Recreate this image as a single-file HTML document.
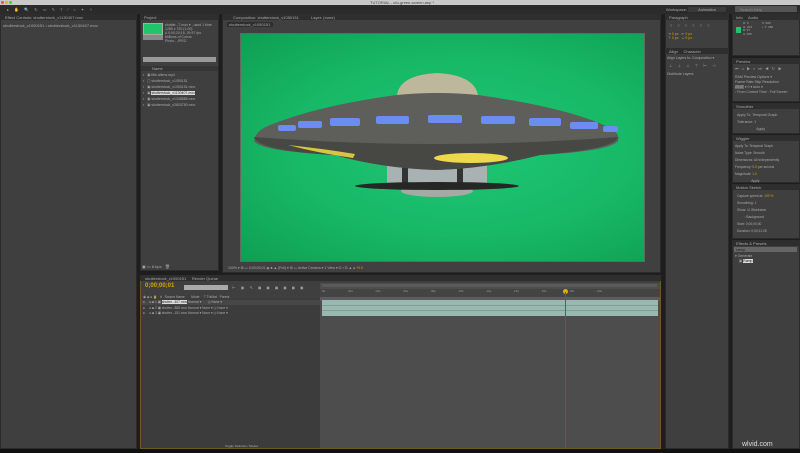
<!DOCTYPE html>
<html><head><style>
*{margin:0;padding:0;box-sizing:border-box}
body{width:800px;height:453px;background:#1e1e1e;position:relative;overflow:hidden;font-family:"Liberation Sans",sans-serif;font-size:4px;color:#bbb}
.a{position:absolute}
.p{position:absolute;background:#3f3f3f;border:1px solid #2a2a2a}
.tab{position:absolute;height:6px;background:#2e2e2e}
.t{position:absolute;white-space:nowrap;font-size:4px;color:#aaa}
.y{color:#d9a400}
</style></head><body>
<div class="a" style="left:0;top:0;width:800px;height:5px;background:#c9c9c9"></div>
<div class="t" style="left:370px;top:0;color:#444">TUTORIAL - ufo-green-screen.aep *</div>
<div class="a" style="left:1px;top:1px;width:3px;height:3px;border-radius:2px;background:#e0554d"></div>
<div class="a" style="left:5px;top:1px;width:3px;height:3px;border-radius:2px;background:#e0b040"></div>
<div class="a" style="left:9px;top:1px;width:3px;height:3px;border-radius:2px;background:#5fbf4c"></div>
<div class="a" style="left:0;top:5px;width:800px;height:9px;background:#2b2b2b"></div>
<div class="t" style="left:7px;top:7px;color:#999;letter-spacing:2px">▸ ✋ 🔍 ↻ ▭ ✎ T ∕ ⌂ ✦ ✧</div>
<div class="t" style="left:666px;top:7px">Workspace: <span style="background:#3a3a3a;padding:0 10px">Animation</span></div>
<div class="a" style="left:735px;top:6px;width:62px;height:6px;background:#555;border-radius:1px"></div>
<div class="t" style="left:740px;top:7px;color:#888">Search Help</div>

<div class="p" style="left:0;top:14px;width:137px;height:435px"></div>
<div class="tab" style="left:0;top:14px;width:137px;background:#2d2d2d"></div>
<div class="t" style="left:5px;top:15px">Effect Controls: shutterstock_v1130407.mov</div>
<div class="t" style="left:3px;top:23px">shutterstock_v1050151 • shutterstock_v1130407.mov</div>

<div class="p" style="left:140px;top:14px;width:79px;height:257px"></div>
<div class="tab" style="left:140px;top:14px;width:79px"></div>
<div class="t" style="left:144px;top:15px">Project</div>
<div class="a" style="left:143px;top:23px;width:20px;height:12px;background:#1fc46b;border:1px solid #aaa"></div>
<div class="a" style="left:143px;top:35px;width:20px;height:5px;background:#888"></div>
<div class="t" style="left:165px;top:23px;line-height:4px;font-size:3.5px">shutter...7.mov ▾ , used 1 time<br>1280 x 720 (1.00)<br>Δ 0;00;20;16, 29.97 fps<br>Millions of Colors<br>Photo - JPEG</div>
<div class="a" style="left:143px;top:57px;width:73px;height:5px;background:#9a9a9a"></div>
<div class="a" style="left:141px;top:66px;width:77px;height:5px;background:#353535"></div>
<div class="t" style="left:152px;top:66px">Name</div>
<div class="t" style="left:143px;top:72px;line-height:6px;font-size:3.5px">▪ &nbsp; ▣ title-aliens.mp4<br>▪ &nbsp; ▢ shutterstock_v1050151<br>▪ &nbsp; ▣ shutterstock_v1050151.mov<br>▪ &nbsp; ▣ <span style="background:#ddd;color:#222">shutterstock_v1130407.mov</span><br>▪ &nbsp; ▣ shutterstock_v1348888.mov<br>▪ &nbsp; ▣ shutterstock_v2803750.mov</div>
<div class="t" style="left:142px;top:264px">▣ ▭ 8 bpc &nbsp; 🗑</div>

<div class="p" style="left:222px;top:14px;width:439px;height:259px;background:#404040"></div>
<div class="tab" style="left:222px;top:14px;width:439px"></div>
<div class="t" style="left:233px;top:15px">Composition: shutterstock_v1050151 &nbsp; &nbsp; &nbsp; &nbsp; &nbsp; Layer: (none)</div>
<div class="a" style="left:227px;top:22px;width:46px;height:5px;background:#2e2e2e"></div>
<div class="t" style="left:229px;top:22px">shutterstock_v1050151</div>
<div class="a" style="left:240px;top:33px;width:405px;height:229px;background:radial-gradient(ellipse at 55% 50%,#1fc775 0%,#17b866 55%,#0f9f52 100%);border:1px solid #666"></div>
<svg class="a" style="left:240px;top:33px" width="405" height="229" viewBox="0 0 405 229">
<path d="M157 62 Q160 42 197 40 Q234 42 238 62Z" fill="#bdb79c"/>
<rect x="147" y="120" width="100" height="34" fill="#a9b2b2"/>
<rect x="162" y="122" width="6" height="30" fill="#333"/>
<rect x="217" y="122" width="6" height="30" fill="#333"/>
<ellipse cx="197" cy="158" rx="36" ry="6" fill="#a5aaa5"/>
<ellipse cx="197" cy="153" rx="82" ry="4" fill="#262626"/>
<path d="M157 62 Q197 58 238 62 Q330 75 370 95 Q380 100 378 108 Q370 118 300 122 Q250 135 197 137 Q140 135 95 122 Q20 118 14 108 Q15 98 30 92 Q80 72 157 62Z" fill="#5e5e5a"/>
<path d="M14 104 Q197 118 378 104 Q376 116 300 122 Q250 135 197 137 Q140 135 95 122 Q18 118 14 104Z" fill="#474744"/>
<g fill="#6b8cf0"><rect x="38" y="92" width="18" height="6" rx="2"/><rect x="58" y="88" width="24" height="7" rx="2"/><rect x="90" y="85" width="30" height="8" rx="2"/><rect x="136" y="83" width="33" height="8" rx="2"/><rect x="188" y="82" width="34" height="8" rx="2"/><rect x="241" y="83" width="34" height="8" rx="2"/><rect x="289" y="85" width="32" height="8" rx="2"/><rect x="330" y="89" width="28" height="7" rx="2"/><rect x="363" y="93" width="15" height="6" rx="2"/></g>
<ellipse cx="231" cy="125" rx="37" ry="5" fill="#eed84c"/>
<path d="M48 112 Q85 116 115 121 L113 125 Q78 120 48 112Z" fill="#d9c640"/>
</svg>
<div class="t" style="left:228px;top:266px;font-size:3.5px">100% ▾ ⊞ ▭ 0;00;00;01 ◉ ♣ ▲ (Full) ▾ ⊞ ▭ Active Camera ▾ 1 View ▾ ⊡ ▪ ⊟ ▲ ● <span class="y">+0.0</span></div>

<div class="p" style="left:665px;top:14px;width:64px;height:35px"></div>
<div class="tab" style="left:665px;top:14px;width:64px"></div>
<div class="t" style="left:669px;top:15px">Paragraph</div>
<div class="t" style="left:670px;top:23px;color:#888;letter-spacing:2px">≡ ≡ ≡ ≡ ≡ ≡</div>
<div class="t" style="left:668px;top:32px;font-size:3.5px;line-height:4px">⇥ <span class="y">0 px</span> &nbsp; ⇤ <span class="y">0 px</span><br>⇡ <span class="y">0 px</span> &nbsp; ⇣ <span class="y">0 px</span></div>
<div class="p" style="left:665px;top:48px;width:64px;height:401px"></div>
<div class="tab" style="left:665px;top:48px;width:64px"></div>
<div class="t" style="left:669px;top:49px">Align &nbsp; &nbsp; Character</div>
<div class="t" style="left:667px;top:56px;font-size:3.5px">Align Layers to: Composition ▾</div>
<div class="t" style="left:669px;top:63px;color:#999;letter-spacing:2px">⊥ ⊥ ⊥ ⊤ ⊢ ⊣</div>
<div class="t" style="left:667px;top:72px;font-size:3.5px">Distribute Layers:</div>

<div class="p" style="left:732px;top:14px;width:68px;height:42px"></div>
<div class="tab" style="left:732px;top:14px;width:68px"></div>
<div class="t" style="left:736px;top:15px">Info &nbsp; &nbsp; Audio</div>
<div class="a" style="left:736px;top:27px;width:5px;height:6px;background:#22c46a"></div>
<div class="t" style="left:743px;top:22px;font-size:3px;line-height:3.5px">R: 0<br>G: 203<br>B: 97<br>A: 255</div>
<div class="t" style="left:762px;top:22px;font-size:3px;line-height:3.5px">X: 609<br>+ Y: 350</div>
<div class="p" style="left:732px;top:58px;width:68px;height:44px"></div>
<div class="tab" style="left:732px;top:58px;width:68px"></div>
<div class="t" style="left:736px;top:59px">Preview</div>
<div class="t" style="left:735px;top:66px;color:#999;letter-spacing:1px">⏮ ◂ ▶ ▸ ⏭ ◀ ↻ ▶</div>
<div class="t" style="left:735px;top:75px;font-size:3.5px;line-height:5px">RAM Preview Options ▾<br>Frame Rate Skip Resolution<br><span style="background:#666">29.97</span> ▾ 0 ▾ Auto ▾<br>▫ From Current Time ▫ Full Screen</div>
<div class="p" style="left:732px;top:103px;width:68px;height:31px"></div>
<div class="tab" style="left:732px;top:103px;width:68px"></div>
<div class="t" style="left:736px;top:104px">Smoother</div>
<div class="t" style="left:737px;top:112px;font-size:3.5px;line-height:7px">Apply To: Temporal Graph<br>Tolerance: <span class="y">1</span><br>&nbsp; &nbsp; &nbsp; &nbsp; &nbsp; &nbsp; &nbsp; &nbsp; &nbsp; &nbsp; Apply</div>
<div class="p" style="left:732px;top:135px;width:68px;height:48px"></div>
<div class="tab" style="left:732px;top:135px;width:68px"></div>
<div class="t" style="left:736px;top:136px">Wiggler</div>
<div class="t" style="left:735px;top:143px;font-size:3.3px;line-height:7px">Apply To: Temporal Graph<br>Noise Type: Smooth<br>Dimensions: All Independently<br>Frequency: <span class="y">5.0</span> per second<br>Magnitude: <span class="y">1.0</span><br>&nbsp; &nbsp; &nbsp; &nbsp; &nbsp; &nbsp; &nbsp; &nbsp; &nbsp; Apply</div>
<div class="p" style="left:732px;top:184px;width:68px;height:55px"></div>
<div class="tab" style="left:732px;top:184px;width:68px"></div>
<div class="t" style="left:736px;top:185px">Motion Sketch</div>
<div class="t" style="left:737px;top:193px;font-size:3.3px;line-height:7px">Capture speed at: <span class="y">100 %</span><br>Smoothing: <span class="y">1</span><br>Show: ☑ Wireframe<br>&nbsp; &nbsp; &nbsp; &nbsp; ▫ Background<br>Start: 0;00;00;00<br>Duration: 0;00;11;28</div>
<div class="p" style="left:732px;top:240px;width:68px;height:209px"></div>
<div class="tab" style="left:732px;top:240px;width:68px"></div>
<div class="t" style="left:736px;top:241px">Effects &amp; Presets</div>
<div class="a" style="left:734px;top:247px;width:63px;height:5px;background:#666"></div>
<div class="t" style="left:736px;top:247px;color:#222">ramp</div>
<div class="t" style="left:735px;top:254px;font-size:3.5px;line-height:5px">▾ Generate<br>&nbsp; &nbsp; ▣ <span style="background:#ddd;color:#222">Ramp</span></div>

<div class="p" style="left:140px;top:275px;width:521px;height:174px;border-color:#6d5a1c"></div>
<div class="tab" style="left:140px;top:275px;width:521px"></div>
<div class="t" style="left:145px;top:276px">shutterstock_v1050151 &nbsp; &nbsp; Render Queue</div>
<div class="t y" style="left:145px;top:283px;font-size:6px;font-weight:bold">0;00;00;01</div>
<div class="a" style="left:184px;top:285px;width:44px;height:5px;background:#aaa"></div>
<div class="t" style="left:232px;top:285px;color:#999;letter-spacing:2px">⊢ ▣ ✎ ◼ ◼ ◼ ◼ ◼ ◼</div>
<div class="a" style="left:141px;top:298px;width:179px;height:150px;background:#3c3c3c"></div>
<div class="t" style="left:143px;top:295px;font-size:3.3px">◉ ◈ ● 🔒 &nbsp; # &nbsp; Source Name &nbsp; &nbsp; &nbsp; Mode &nbsp; &nbsp; T TrkMat &nbsp; Parent</div>
<div class="a" style="left:141px;top:300px;width:179px;height:5px;background:#474747"></div>
<div class="t" style="left:143px;top:300px;font-size:3.3px;line-height:5.5px">● &nbsp; &nbsp; ▸ ■ 1 ▣ <span style="background:#ddd;color:#222">shutter...407.mov</span> Normal ▾ &nbsp; &nbsp; &nbsp; ◎ None ▾<br>● &nbsp; &nbsp; ▸ ■ 2 ▣ shutter...888.mov Normal ▾ None ▾ ◎ None ▾<br>● &nbsp; &nbsp; ▸ ■ 3 ▣ shutter...151.mov Normal ▾ None ▾ ◎ None ▾</div>
<div class="a" style="left:320px;top:283px;width:340px;height:165px;background:#4d4d4d"></div>
<div class="a" style="left:322px;top:284px;width:335px;height:3px;background:#5a5a5a"></div>
<div class="a" style="left:320px;top:289px;width:340px;height:8px;background:#444"></div>
<div class="t" style="left:322px;top:289px;font-size:3px;word-spacing:22px;color:#999">0s 02s 04s 06s 08s 10s 12s 14s 16s 18s 20s</div>
<div class="a" style="left:320px;top:297px;width:340px;height:4px;background:#5c5c5c"></div>
<div class="a" style="left:322px;top:300px;width:336px;height:16px;background:#98b8b0"></div>
<div class="a" style="left:322px;top:305px;width:336px;height:1px;background:#7f9e96"></div>
<div class="a" style="left:322px;top:310px;width:336px;height:1px;background:#7f9e96"></div>
<div class="a" style="left:563px;top:289px;width:5px;height:5px;border-radius:3px;background:#e0b000"></div>
<div class="a" style="left:565px;top:292px;width:1px;height:156px;background:#b33"></div>
<div class="t" style="left:225px;top:444px;font-size:3px">Toggle Switches / Modes</div>
<div class="a" style="left:0;top:449px;width:800px;height:4px;background:#111"></div>
<div class="t" style="left:742px;top:441px;font-size:7px;color:#ddd">wlvid.com</div>
</body></html>
